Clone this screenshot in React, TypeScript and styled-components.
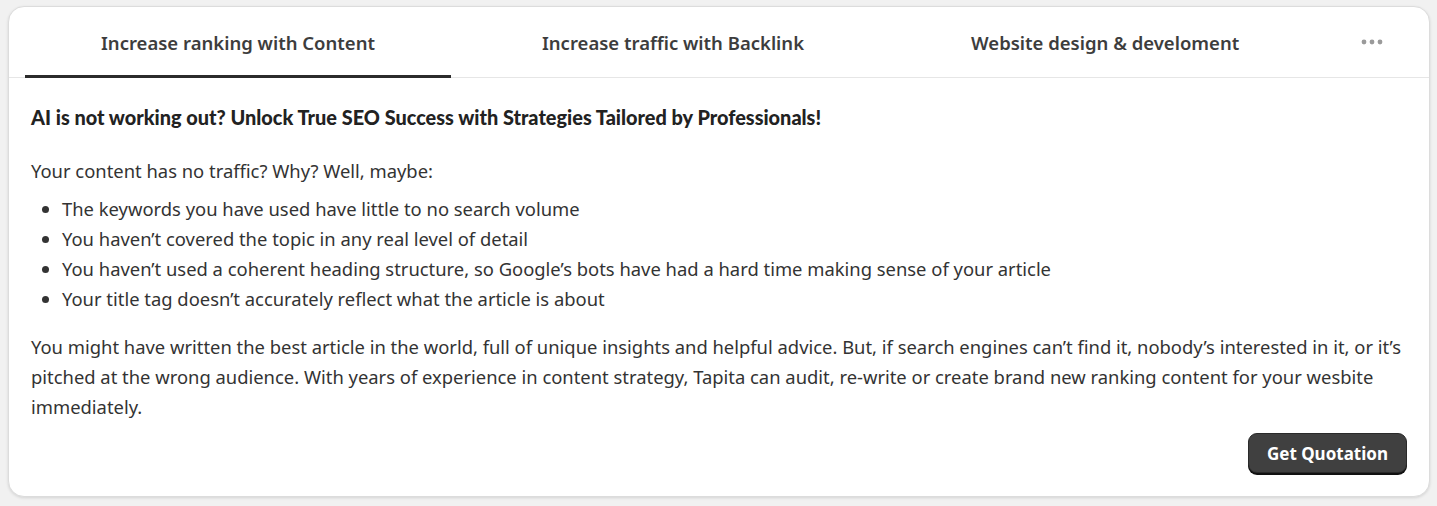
import React, { useState } from "react";
import styled, { createGlobalStyle } from "styled-components";

const GlobalStyle = createGlobalStyle`
  html, body {
    margin: 0;
    padding: 0;
    background: #f1f1f1;
  }
  body {
    font-family: "Noto Sans", "Open Sans", sans-serif;
    color: #333;
  }
`;

const Page = styled.div`
  padding: 6px 7px 8px 8px;
`;

const Card = styled.div`
  background: #fff;
  border: 1px solid #dcdcdc;
  border-radius: 16px;
  box-shadow: 0 1px 3px rgba(0, 0, 0, 0.12);
  overflow: hidden;
`;

const TabBar = styled.div`
  display: flex;
  align-items: stretch;
  gap: 15px;
  padding: 0 16px;
  height: 70px;
  border-bottom: 1px solid #e6e6e6;
`;

const Tab = styled.button<{ $active?: boolean }>`
  all: unset;
  cursor: pointer;
  display: flex;
  align-items: center;
  justify-content: center;
  padding: 2px 76px 0;
  font-family: "Noto Sans", sans-serif;
  font-size: 18.5px;
  font-weight: 600;
  color: #3d3d3d;
  border-bottom: 3px solid ${(p) => (p.$active ? "#2b2b2b" : "transparent")};
  margin-bottom: -1px;
  white-space: nowrap;
`;

const More = styled.button`
  all: unset;
  cursor: pointer;
  margin-left: auto;
  display: flex;
  align-items: center;
  justify-content: center;
  width: 44px;
  margin-right: 19px;
`;

const Body = styled.div`
  padding: 27px 22px 23px 22px;
  display: flex;
  flex-direction: column;
`;

const Headline = styled.h3`
  margin: 0 0 27px;
  font-family: "Lato", sans-serif;
  font-weight: 900;
  font-size: 19.9px;
  line-height: 24px;
  color: #222;
`;

const Text = styled.p`
  margin: 0;
  font-size: 18.4px;
  line-height: 30px;
  color: #333;
`;

const List = styled.ul`
  margin: 8px 0 18px;
  padding-left: 31px;
  font-size: 18.4px;
  line-height: 30px;
  color: #333;
`;

const Item = styled.li``;

const Actions = styled.div`
  display: flex;
  justify-content: flex-end;
  margin-top: 11px;
`;

const QuoteButton = styled.button`
  font-family: "Noto Sans", sans-serif;
  font-size: 17px;
  font-weight: 700;
  color: #fff;
  background: #404040;
  border: 1px solid #2a2a2a;
  border-radius: 9px;
  box-shadow: 0 2px 0 #111;
  padding: 0 18px;
  height: 40px;
  cursor: pointer;
`;

const tabs = [
  "Increase ranking with Content",
  "Increase traffic with Backlink",
  "Website design & develoment",
];

export default function App() {
  const [active, setActive] = useState(0);
  return (
    <>
      <GlobalStyle />
      <Page>
        <Card>
          <TabBar>
            {tabs.map((t, i) => (
              <Tab key={t} $active={i === active} onClick={() => setActive(i)}>
                {t}
              </Tab>
            ))}
            <More aria-label="More">
              <svg width="22" height="6" viewBox="0 0 22 6">
                <circle cx="3" cy="3" r="2.4" fill="#9a9a9a" />
                <circle cx="11" cy="3" r="2.4" fill="#9a9a9a" />
                <circle cx="19" cy="3" r="2.4" fill="#9a9a9a" />
              </svg>
            </More>
          </TabBar>
          <Body>
            <Headline>
              AI is not working out? Unlock True SEO Success with Strategies Tailored by Professionals!
            </Headline>
            <Text>Your content has no traffic? Why? Well, maybe:</Text>
            <List>
              <Item>The keywords you have used have little to no search volume</Item>
              <Item>You haven’t covered the topic in any real level of detail</Item>
              <Item>
                You haven’t used a coherent heading structure, so Google’s bots have had a hard time making sense of your article
              </Item>
              <Item>Your title tag doesn’t accurately reflect what the article is about</Item>
            </List>
            <Text>
              You might have written the best article in the world, full of unique insights and helpful advice. But, if search engines can’t find it, nobody’s interested in it, or it’s pitched at the wrong audience. With years of experience in content strategy, Tapita can audit, re-write or create brand new ranking content for your wesbite immediately.
            </Text>
            <Actions>
              <QuoteButton>Get Quotation</QuoteButton>
            </Actions>
          </Body>
        </Card>
      </Page>
    </>
  );
}
